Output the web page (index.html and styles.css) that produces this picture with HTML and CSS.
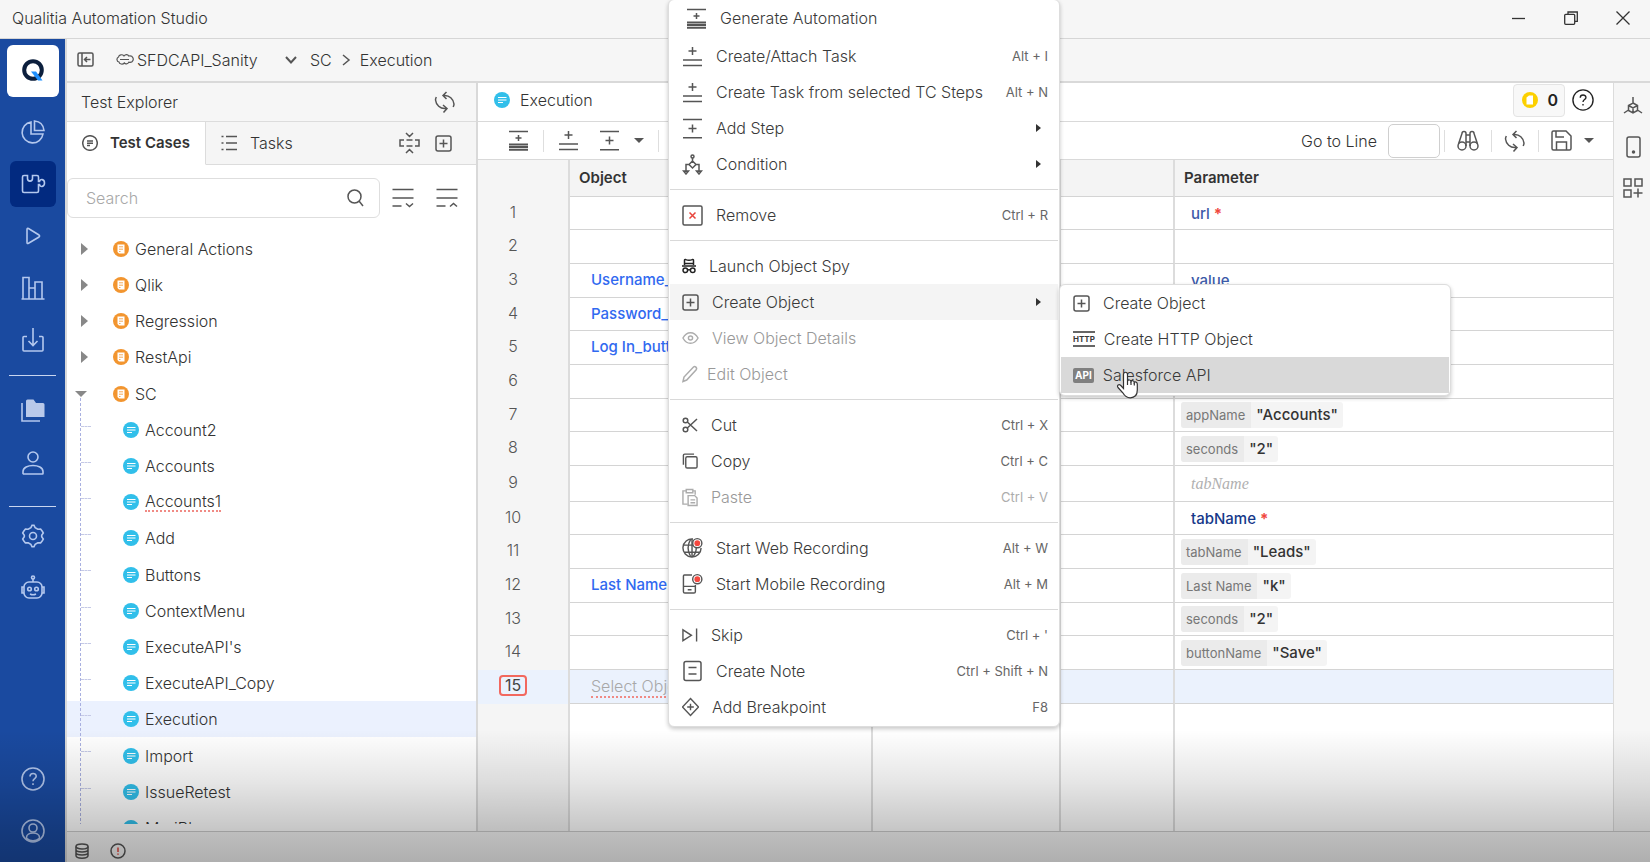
FILE: index.html
```html
<!DOCTYPE html>
<html lang="en">
<head>
<meta charset="utf-8">
<title>Qualitia Automation Studio</title>
<link rel="stylesheet" href="styles.css">
</head>
<body>
<svg class="sprite" aria-hidden="true">
  <symbol id="generate" viewBox="0 0 21 21"><path d="M1 1.5h19M10.500 5v6M7.500 8h6"/><path d="M1 14.500h19M1 17h19M1 19.800h19" stroke-width="1.900"/></symbol>
  <symbol id="task" viewBox="0 0 21 21"><path d="M10.500 1v8M6.500 5h8M1 14h19M1 19.500h19"/></symbol>
  <symbol id="step" viewBox="0 0 21 21"><path d="M1 1.500h19M10.500 6.500v8M6.500 10.500h8M1 19.800h19"/></symbol>
  <symbol id="condition" viewBox="0 0 21 21"><circle cx="10.500" cy="2.500" r="1.500"/><path d="M10.500 4v3M10.500 7l3.500 3.500-3.500 3.500L7 10.500zM7 10.500H4V18M14 10.500h3V18M1.500 17h5L4 20zM14.500 17h5L17 20z"/></symbol>
  <symbol id="remove" viewBox="0 0 21 21"><rect x="1" y="1" width="19" height="19" rx="1.500"/><path class="red" d="M7.500 7.500l6 6M13.500 7.500l-6 6"/></symbol>
  <symbol id="spy" viewBox="0 0 14 16"><path d="M2.500 7V2.500Q2.500 1.300 3.700 1.600q3.300 1.200 6.600 0Q11.500 1.300 11.500 2.500V7M0 8h14M3 5.500h8"/><circle cx="3.300" cy="12.300" r="2.300"/><circle cx="10.700" cy="12.300" r="2.300"/><path d="M5.600 11.800h2.800"/></symbol>
  <symbol id="plusbox" viewBox="0 0 17 17"><rect x="1" y="1" width="15" height="15" rx="2"/><path d="M8.500 4.500v8M4.500 8.500h8"/></symbol>
  <symbol id="eye" viewBox="0 0 18 16"><path d="M1 8c4-7.500 12-7.500 16 0-4 7.500-12 7.500-16 0z"/><circle cx="9" cy="8" r="2.200"/></symbol>
  <symbol id="pencil" viewBox="0 0 16 18"><path d="M1 16.500l1-4.500L11.500 2c1.500-1.300 4 .8 2.700 2.700L4.700 15z"/></symbol>
  <symbol id="cut" viewBox="0 0 16 16"><circle cx="3.500" cy="3.500" r="2.300"/><circle cx="3.500" cy="12.500" r="2.300"/><path d="M5.300 5L15 14M5.300 11L15 2"/></symbol>
  <symbol id="copy" viewBox="0 0 17 17"><rect x="4" y="4" width="12" height="12" rx="1.500"/><path d="M1.500 12.500V2.500q0-1.300 1.300-1.300h10"/></symbol>
  <symbol id="paste" viewBox="0 0 17 19"><path d="M6 16.500H1V2.500h3M11.500 2.500h2.500v4M4.500 1h7v3.500h-7z"/><path d="M6.500 7.500h7l2.500 2.500v8H6.500zM9 12h5M9 15h5"/></symbol>
  <symbol id="web" viewBox="0 0 22 22"><path d="M11.500 1.500A9.500 9.500 0 1 0 20 11M2 8h10M2.500 15.500h16.500M9 2c-3.500 6-3.500 12 0 18M11 20.500c3-3 4-6 4-10M10.500 2v18.500"/><circle class="halo" cx="16" cy="6" r="4.800"/><circle class="rec" cx="16" cy="6" r="3"/></symbol>
  <symbol id="mobilerec" viewBox="0 0 22 22"><path d="M10.500 1.500H2.500Q1.500 1.500 1.500 2.500v16.500q0 1.500 1.500 1.500h9.500q1.500 0 1.500-1.500V12M1.500 13.500h12.500M6 17h4"/><circle class="halo" cx="16" cy="6" r="4.800"/><circle class="rec" cx="16" cy="6" r="3"/></symbol>
  <symbol id="skip" viewBox="0 0 17 16"><path d="M1 2.500v11.500l9-5.700zM15.500 1v14"/></symbol>
  <symbol id="note" viewBox="0 0 21 22"><rect x="2" y="1.500" width="17" height="19" rx="2"/><path d="M6.500 7.500h8M6.500 14h8"/></symbol>
  <symbol id="break" viewBox="0 0 18 20"><path d="M9 1l8.500 9L9 19 .5 10zM9 6.500v7M5.500 10h7"/></symbol>
  <symbol id="refresh" viewBox="0 0 22 22"><path d="M9.500 4.500c6-.8 10 4 10.500 8.500 0 1-.3 2-.8 3M12.500 1L9 4.500l3.500 3.500M12 17.500c-6 .8-10-4-10.500-8.500 0-1 .3-2 .8-3M9 14l4 3.500-3.500 4"/></symbol>
  <symbol id="tc" viewBox="0 0 16 16"><circle cx="8" cy="8" r="8" fill="#31bfea" stroke="none"/><path d="M4 5.500h8.500M4 8h8.500M4 10.500h5" stroke="#fff" stroke-width="1.200"/></symbol>
  <symbol id="folder" viewBox="0 0 16 16"><circle cx="8" cy="8" r="8" fill="#f2952f" stroke="none"/><path d="M4.500 3.500h7v9h-5.500l-1.500-1.500z" fill="#fff" stroke="none"/><path d="M6 5.800h4M6 8.200h4M6 10.500h1.500" stroke="#f2952f" stroke-width=".8"/></symbol>
  <symbol id="help" viewBox="0 0 24 24"><circle cx="12" cy="12" r="11"/><path d="M9 9.500c0-4 6.200-3.800 6.200-.3 0 2.400-3.200 2.300-3.200 5M12 16.300v1.700"/></symbol>
</svg>

<header class="titlebar">
  <h1>Qualitia Automation Studio</h1>
  <div class="window-controls">
    <button aria-label="Minimize"><svg width="14" height="14"><path d="M0 7.500h13"/></svg></button>
    <button aria-label="Restore"><svg width="14" height="14"><rect x=".7" y="3.300" width="10" height="10" rx="1"/><path d="M4 3V1h9.300v9.300H11"/></svg></button>
    <button aria-label="Close"><svg width="14" height="14"><path d="M.5.500l13 13M13.500.500l-13 13"/></svg></button>
  </div>
</header>

<div class="shell">
  <nav class="rail" aria-label="Main">
    <button class="logo" aria-label="Qualitia"><svg width="24" height="26" viewBox="0 0 24 26"><circle cx="12" cy="12" r="8.800" stroke="#0c1f3d" stroke-width="4"/><path d="M10 13.500h5l6.500 9h-4.500z" fill="#1e90ff" stroke="none"/></svg></button>
    <button aria-label="Dashboard"><svg width="24" height="24"><path d="M10 2A10.500 10.500 0 1 0 22 14H10zM13.500 1v9.500H23C22.500 5 19 1.500 13.500 1z"/></svg></button>
    <button class="active" aria-label="Test design"><svg width="26" height="24"><path d="M4 3.500h3.500v3c0 3.500 5 3.500 5 0v-3H17q1.500 0 1.500 1.500v4.500h1c.5-3 5-2.500 5 1.500s-4.500 4.500-5 1.500h-1V19q0 1.500-1.500 1.500H4Q2.500 20.500 2.500 19V5Q2.500 3.500 4 3.500z"/></svg></button>
    <button aria-label="Run"><svg width="24" height="24"><path d="M6 5.500v13q0 1.500 1.500.8L18 13q1.200-1 0-2L7.500 4.500Q6 4 6 5.500z"/></svg></button>
    <button aria-label="Reports"><svg width="24" height="24"><path d="M.5 23h23M2 23V1.500h6V23M8 12h6v11M14 23V6h7v17"/></svg></button>
    <button aria-label="Import"><svg width="24" height="26"><path d="M6 9.500H3q-1 0-1 1V23q0 1 1 1h18q1 0 1-1V10.500q0-1-1-1h-3M12 1v17M7.500 14l4.500 4.500 4.500-4.500"/></svg></button>
    <hr>
    <button aria-label="Projects"><svg width="24" height="24"><path class="solid" d="M5 2q0-1.500 1.500-1.500h6L15 4h7q1.500 0 1.500 1.500V18H5z"/><path d="M1 4v18h18"/></svg></button>
    <button aria-label="Users"><svg width="24" height="24"><circle cx="12" cy="6" r="5"/><path d="M2 22.500v-2c0-8 20-8 20 0v2q0 .5-.5.500h-19z"/></svg></button>
    <hr class="low">
    <button aria-label="Settings"><svg width="24" height="24"><path d="M9.800 3.800L11 1.300h2l1.200 2.500 2.600 1.500 2.800-.2 1.700 2.200 1 1.700-1.600 2.300v1.400l1.600 2.300-1 1.700-1.700 2.200-2.800-.2-2.600 1.500L13 22.700h-2l-1.200-2.500-2.600-1.500-2.800.2-1.700-2.200-1-1.700 1.600-2.300v-1.400L1.700 9l1-1.700 1.700-2.200 2.800.2z"/><circle cx="12" cy="12" r="3.500"/></svg></button>
    <button aria-label="Assistant"><svg width="24" height="26"><rect x="3" y="7" width="18" height="16" rx="5"/><circle cx="8.500" cy="14" r="1.800"/><circle cx="15.500" cy="14" r="1.800"/><circle cx="12" cy="2.500" r="1.500"/><path d="M12 4v3M9 19c2 1 4 1 6 0M3 12H1v6h2M21 12h2v6h-2"/></svg></button>
    <span class="grow"></span>
    <button aria-label="Help"><svg width="24" height="24"><use href="#help"/></svg></button>
    <button aria-label="Account"><svg width="24" height="24"><circle cx="12" cy="12" r="11"/><circle cx="12" cy="9" r="4"/><path d="M5.500 19.500v-1c0-6 13-6 13 0v1c-4 3-9 3-13 0z"/></svg></button>
  </nav>

  <div class="work">
    <div class="crumbs">
      <button aria-label="Collapse panel"><svg width="17" height="15"><rect x="1" y="1" width="15" height="13" rx="1.500"/><path d="M5 1v13M13.500 7.500H7.500M10 5L7.500 7.500 10 10"/></svg></button>
      <svg class="cloud" width="18" height="14"><path d="M2.500 4C3 1.500 6.500 1 8 3c1.500-2 4-1.500 4.700 0C17 2 18.500 6.500 16 8.800c-1 .8-2.500.6-3.200.4-1 2-3.500 2-4.500.8-1.500 1.800-5 1.200-5.300-1C.5 8.500.3 5 2.500 4z"/><path d="M4 6.500h9" stroke-width="1"/></svg>
      <label class="project"><select aria-label="Project"><option>SFDCAPI_Sanity</option></select><svg width="12" height="8"><path d="M1 1l5 5.500L11 1" stroke-width="2"/></svg></label>
      <a href="#sc">SC</a>
      <svg width="10" height="12"><path d="M2 1l6 5-6 5"/></svg>
      <a href="#execution">Execution</a>
    </div>

    <div class="panes">
      <section class="explorer">
        <div class="explorer-head"><h2>Test Explorer</h2><button aria-label="Refresh"><svg width="22" height="22"><use href="#refresh"/></svg></button></div>
        <div class="tabs">
          <button class="tab on"><svg width="16" height="16"><circle cx="8" cy="8" r="7.300"/><path d="M5 6h6M5 8.300h6M5 10.500h3"/></svg>Test Cases</button>
          <button class="tab"><svg width="17" height="18"><path d="M5 2.500h11M5 9h11M5 15.500h11M.5 2.500h2M.5 9h2M.5 15.500h2"/></svg>Tasks</button>
          <div class="tab-tools">
            <button aria-label="Collapse"><svg width="21" height="22"><path d="M7 1l3.500 3.500L14 1M7 21l3.500-3.500L14 21M5 8H1v6h4M16 8h4v6h-4M7.500 8h6M7.500 14h6" /></svg></button>
            <button aria-label="Add"><svg width="17" height="17"><use href="#plusbox"/></svg></button>
          </div>
        </div>
        <div class="find">
          <label class="search"><input type="search" placeholder="Search" aria-label="Search"><svg width="17" height="18"><circle cx="7.500" cy="7.500" r="6.500"/><path d="M12 12l4 5"/></svg></label>
          <button aria-label="Expand all"><svg width="22" height="20"><path d="M.5 1.500h21M.5 10h21M.5 18h9M14 15.500l3.500 3 3.500-3"/></svg></button>
          <button aria-label="Collapse all"><svg width="22" height="20"><path d="M.5 1.500h21M.5 10h21M.5 18h9M14 18.500l3.500-3 3.500 3"/></svg></button>
        </div>
        <div class="tree">
          <ul>
            <li><i class="arrow"></i><svg><use href="#folder"/></svg>General Actions</li>
            <li><i class="arrow"></i><svg><use href="#folder"/></svg>Qlik</li>
            <li><i class="arrow"></i><svg><use href="#folder"/></svg>Regression</li>
            <li><i class="arrow"></i><svg><use href="#folder"/></svg>RestApi</li>
            <li><i class="arrow open"></i><svg><use href="#folder"/></svg>SC</li>
          </ul>
          <ul class="kids">
            <li><svg><use href="#tc"/></svg>Account2</li>
            <li><svg><use href="#tc"/></svg>Accounts</li>
            <li><svg><use href="#tc"/></svg><span class="wavy">Accounts1</span></li>
            <li><svg><use href="#tc"/></svg>Add</li>
            <li><svg><use href="#tc"/></svg>Buttons</li>
            <li><svg><use href="#tc"/></svg>ContextMenu</li>
            <li><svg><use href="#tc"/></svg>ExecuteAPI's</li>
            <li><svg><use href="#tc"/></svg>ExecuteAPI_Copy</li>
            <li class="selected"><svg><use href="#tc"/></svg>Execution</li>
            <li><svg><use href="#tc"/></svg>Import</li>
            <li><svg><use href="#tc"/></svg>IssueRetest</li>
            <li><svg><use href="#tc"/></svg>MariBl</li>
          </ul>
        </div>
      </section>

      <main class="editor">
        <div class="editor-tabs">
          <svg width="16" height="16"><use href="#tc"/></svg><span>Execution</span>
          <button class="counter"><svg width="16" height="16"><circle cx="8" cy="8" r="8" fill="#fcd000" stroke="none"/><path d="M4.500 5.500L7 3.500h4v9H4.500z" fill="#fff" stroke="none"/></svg>0</button>
          <button class="dark" aria-label="Help"><svg width="22" height="22"><use href="#help"/></svg></button>
        </div>
        <div class="toolbar">
          <button aria-label="Generate automation"><svg width="21" height="21"><use href="#generate"/></svg></button><i class="sep"></i>
          <button aria-label="Create task"><svg width="21" height="21"><use href="#task"/></svg></button>
          <button class="more" aria-label="Add step"><svg width="21" height="21"><use href="#step"/></svg><i class="caret"></i></button><i class="sep"></i>
          <label class="goto">Go to Line <input type="text"></label><i class="sep"></i>
          <button aria-label="Find"><svg width="22" height="22"><circle cx="5" cy="16" r="4"/><circle cx="17" cy="16" r="4"/><path d="M1.500 14L5 3.500Q5 1.500 7 1.500t2 2V16M20.500 14L17 3.500q0-2-2-2t-2 2V16M9 5h4M9 12h4"/></svg></button><i class="sep"></i>
          <button aria-label="Refresh"><svg width="22" height="22"><use href="#refresh"/></svg></button><i class="sep"></i>
          <button class="more" aria-label="Save"><svg width="21" height="21"><path d="M1 2.500Q1 1 2.500 1H15l5 5v12.500q0 1.500-1.500 1.500h-16Q1 20 1 18.500zM5 1v6h8M5.500 20v-8h10v8"/></svg><i class="caret"></i></button>
        </div>
        <div class="grid">
          <table>
            <colgroup><col class="c-num"><col class="c-obj"><col class="c-act"><col class="c-val"><col></colgroup>
            <thead><tr><td></td><th>Object</th><th></th><th></th><th>Parameter</th></tr></thead>
            <tbody>
              <tr><td>1</td><td></td><td></td><td></td><td><span class="need">url <b>*</b></span></td></tr>
              <tr><td>2</td><td></td><td></td><td></td><td></td></tr>
              <tr><td>3</td><td><a href="#u">Username_input</a></td><td></td><td></td><td><span class="need">value</span></td></tr>
              <tr><td>4</td><td><a href="#p">Password_input</a></td><td></td><td></td><td></td></tr>
              <tr><td>5</td><td><a href="#l">Log In_button</a></td><td></td><td></td><td></td></tr>
              <tr><td>6</td><td></td><td></td><td></td><td></td></tr>
              <tr><td>7</td><td></td><td></td><td></td><td><span class="chip"><span>appName</span><b>"Accounts"</b></span></td></tr>
              <tr><td>8</td><td></td><td></td><td></td><td><span class="chip"><span>seconds</span><b>"2"</b></span></td></tr>
              <tr class="tall"><td>9</td><td></td><td></td><td></td><td><em>tabName</em></td></tr>
              <tr><td>10</td><td></td><td></td><td></td><td><span class="need strong">tabName <b>*</b></span></td></tr>
              <tr><td>11</td><td></td><td></td><td></td><td><span class="chip"><span>tabName</span><b>"Leads"</b></span></td></tr>
              <tr><td>12</td><td><a href="#n">Last Name</a></td><td></td><td></td><td><span class="chip"><span>Last Name</span><b>"k"</b></span></td></tr>
              <tr><td>13</td><td></td><td></td><td></td><td><span class="chip"><span>seconds</span><b>"2"</b></span></td></tr>
              <tr><td>14</td><td></td><td></td><td></td><td><span class="chip"><span>buttonName</span><b>"Save"</b></span></td></tr>
              <tr class="current"><td><span class="mark">15</span></td><td><span class="hint">Select Object</span></td><td></td><td></td><td></td></tr>
              <tr class="rest"><td></td><td></td><td></td><td></td><td></td></tr>
            </tbody>
          </table>
        </div>
      </main>

      <aside class="side">
        <button aria-label="Objects"><svg width="20" height="20"><path d="M10 1v6M10 7l4.500 2.500v5L10 17l-4.500-2.500v-5zM5.500 9.500L10 12l4.500-2.500M10 12v5M5.500 14L1 17M14.500 14l4.500 3"/></svg></button>
        <button aria-label="Devices"><svg width="15" height="22"><rect x="1" y="1" width="13" height="20" rx="2"/><circle cx="7.500" cy="16" r="1" fill="currentColor"/></svg></button>
        <button aria-label="Plugins"><svg width="20" height="20"><path d="M1 1h7v7H1zM12 1h7v7h-7zM1 12h7v7H1zM15 10.500v9M10.500 15h9"/></svg></button>
      </aside>
    </div>

    <footer class="status">
      <button aria-label="Database"><svg width="14" height="16"><ellipse cx="7" cy="3.500" rx="6" ry="2.500"/><path d="M1 3.500v9c0 3.500 12 3.500 12 0v-9M1 6.500c0 3.300 12 3.300 12 0M1 9.500c0 3.300 12 3.300 12 0"/></svg></button>
      <button aria-label="Errors"><svg width="16" height="16"><circle cx="8" cy="8" r="7"/><path class="red" d="M8 4.500v4.500M8 10.500v1.200"/></svg></button>
    </footer>
  </div>
</div>

<menu class="menu context">
  <li class="first"><button><svg width="21" height="21"><use href="#generate"/></svg>Generate Automation</button></li>
  <li><button><svg width="21" height="21"><use href="#task"/></svg>Create/Attach Task<kbd>Alt + I</kbd></button></li>
  <li><button><svg width="21" height="21"><use href="#task"/></svg>Create Task from selected TC Steps<kbd>Alt + N</kbd></button></li>
  <li><button><svg width="21" height="21"><use href="#step"/></svg>Add Step<i class="next"></i></button></li>
  <li><button><svg width="21" height="21"><use href="#condition"/></svg>Condition<i class="next"></i></button></li>
  <li class="line"></li>
  <li><button><svg width="21" height="21"><use href="#remove"/></svg>Remove<kbd>Ctrl + R</kbd></button></li>
  <li class="line"></li>
  <li><button><svg class="ink" width="14" height="16"><use href="#spy"/></svg>Launch Object Spy</button></li>
  <li class="hover"><button><svg width="17" height="17"><use href="#plusbox"/></svg>Create Object<i class="next"></i></button></li>
  <li><button disabled><svg width="17" height="16"><use href="#eye"/></svg>View Object Details</button></li>
  <li><button class="tight" disabled><svg width="16" height="18"><use href="#pencil"/></svg>Edit Object</button></li>
  <li class="line"></li>
  <li><button><svg width="16" height="16"><use href="#cut"/></svg>Cut<kbd>Ctrl + X</kbd></button></li>
  <li><button><svg width="16" height="16"><use href="#copy"/></svg>Copy<kbd>Ctrl + C</kbd></button></li>
  <li><button disabled><svg width="16" height="19"><use href="#paste"/></svg>Paste<kbd>Ctrl + V</kbd></button></li>
  <li class="line"></li>
  <li><button><svg width="21" height="22"><use href="#web"/></svg>Start Web Recording<kbd>Alt + W</kbd></button></li>
  <li><button><svg width="21" height="22"><use href="#mobilerec"/></svg>Start Mobile Recording<kbd>Alt + M</kbd></button></li>
  <li class="line"></li>
  <li><button><svg width="16" height="16"><use href="#skip"/></svg>Skip<kbd>Ctrl + '</kbd></button></li>
  <li><button><svg width="21" height="22"><use href="#note"/></svg>Create Note<kbd>Ctrl + Shift + N</kbd></button></li>
  <li><button><svg width="17" height="20"><use href="#break"/></svg>Add Breakpoint<kbd>F8</kbd></button></li>
</menu>

<menu class="menu sub">
  <li><button><svg width="17" height="17"><use href="#plusbox"/></svg>Create Object</button></li>
  <li><button class="tight"><span class="http">HTTP</span>Create HTTP Object</button></li>
  <li class="pressed"><button class="tight"><span class="api">API</span>Salesforce API</button></li>
</menu>

<svg class="pointer" width="24" height="28" viewBox="0 0 24 28" aria-hidden="true"><path d="M7.500 17.500V3.500c0-3 4-3 4 0V10c.5-1.500 3.300-1.300 3.500.5.700-1.300 3.300-1 3.300 1 .8-1 3-.6 3 1.500v6c0 5-2.500 7.800-7 7.800-4 0-5.800-2-7.500-5L2 16.500c-1.500-2 .8-3.800 2.800-2z"/><path d="M11.500 10v4M15 10.500v3.500M18.300 11.500v3"/></svg>
<div class="shade"></div>
</body>
</html>
```
FILE: styles.css
```css
* { box-sizing: border-box; }
body {
  margin: 0;
  height: 100vh;
  display: flex;
  flex-direction: column;
  overflow: hidden;
  position: relative;
  background: #f6f6f6;
  color: #333;
  font: 300 16px/20px Inter, "Liberation Sans", sans-serif;
}
button, input, select { font: inherit; color: inherit; }
button {
  display: flex;
  align-items: center;
  justify-content: center;
  border: 0;
  padding: 0;
  background: none;
  white-space: nowrap;
}
h1, h2 { margin: 0; font-size: 16px; font-weight: 300; }
a { color: inherit; text-decoration: none; }
ul, menu { margin: 0; padding: 0; list-style: none; }
svg { flex: none; fill: none; stroke: #555; stroke-width: 1.5; }
.sprite { display: none; }
.red { stroke: #e8453c; }
.rec { fill: #f5483f; stroke: none; }
.halo { fill: #fff; }

.titlebar {
  flex: none;
  height: 39px;
  display: flex;
  align-items: center;
  justify-content: space-between;
  padding: 0 20px 2px 12px;
  border-bottom: 1px solid #d6d6d6;
}
.window-controls { display: flex; gap: 38px; }
.window-controls svg { stroke: #333; stroke-width: 1.3; }

.shell { flex: 1; display: flex; min-height: 0; }
.rail {
  width: 65px;
  flex: none;
  display: flex;
  flex-direction: column;
  align-items: center;
  padding: 6px 0 2px;
  background: #1a4aa0;
}
.rail button { width: 46px; height: 46px; margin-bottom: 6px; border-radius: 6px; flex: none; }
.rail svg { stroke: #b4c8ee; stroke-width: 1.6; }
.rail .solid { fill: #b9c9ea; stroke: none; }
.rail .logo { width: 52px; height: 52px; margin-bottom: 12px; background: #fff; }
.rail .active { background: #022a80; }
.rail hr { width: 47px; height: 1px; margin: 6px 0 12px; border: 0; background: #c9d6f0; flex: none; }
.rail .low { margin: 14px 0 6px; }
.grow { flex: 1; }

.work { flex: 1; min-width: 0; display: flex; flex-direction: column; border-left: 2px solid #d9d9d9; }
.crumbs {
  height: 44px;
  flex: none;
  display: flex;
  align-items: center;
  padding: 0 10px 1px;
  border-bottom: 2px solid #d9d9d9;
}
.crumbs > button { margin-right: 22px; }
.cloud { margin-right: 3px; stroke-width: 1.2; }
.project { display: flex; align-items: center; width: 160px; margin-right: 13px; }
.project select { flex: 1; min-width: 0; appearance: none; border: 0; padding: 0; background: none; }
.crumbs > a + svg { margin: 0 9px; }

.panes { flex: 1; display: flex; min-height: 0; }
.explorer { width: 411px; flex: none; display: flex; flex-direction: column; background: #fff; border-right: 2px solid #d9d9d9; }
.explorer-head { height: 39px; flex: none; display: flex; align-items: center; justify-content: space-between; padding: 0 20px 0 14px; background: #f6f6f6; border-bottom: 1px solid #dcdcdc; }
.tabs { height: 43px; flex: none; display: flex; background: #f5f5f5; }
.tab { gap: 12px; padding: 0 15px; border-bottom: 1px solid #dcdcdc; }
.tab.on { background: #fff; border-bottom-color: #fff; border-right: 1px solid #dcdcdc; font-size: 15px; font-weight: 600; color: #333; }
.tab-tools { flex: 1; display: flex; justify-content: flex-end; gap: 15px; padding-right: 24px; border-bottom: 1px solid #dcdcdc; }
.find { flex: none; display: flex; align-items: center; padding: 13px 18px 13px 0; gap: 22px; }
.search { flex: 1; height: 40px; display: flex; align-items: center; padding: 0 15px 0 18px; margin-right: -10px; border: 1px solid #dedede; border-radius: 6px; }
.search input { flex: 1; min-width: 0; border: 0; padding: 0; outline: 0; background: none; }
.search input::placeholder { color: #a8a8a8; }
.tree { flex: 1; overflow: hidden; margin-bottom: 7px; }
.tree li { position: relative; height: 36px; display: flex; align-items: center; padding-left: 46px; gap: 6px; }
.tree li:nth-child(5n) { height: 37px; }
.tree svg { width: 16px; height: 16px; }
.arrow { position: absolute; left: 14px; border: 6px solid transparent; border-width: 6px 0 6px 7px; border-left-color: #888; }
.arrow.open { left: 8px; border-width: 6px 6px 0; border-color: #888 transparent; }
.kids { position: relative; }
.kids::before { content: ""; position: absolute; z-index: 1; left: 13px; top: -14px; bottom: 0; border-left: 1px dashed #a9b0e0; }
.kids li { padding-left: 56px; }
.kids li::before { content: ""; position: absolute; left: 14px; top: 14px; width: 10px; border-top: 1px dashed #c5c9e6; }
.selected { background: #ebf1fe; }
.wavy, .hint { border-bottom: 2px dotted #f08a84; line-height: 18px; }

.editor { flex: 1; min-width: 0; display: flex; flex-direction: column; background: #fff; border-right: 1px solid #dcdcdc; }
.editor-tabs { height: 39px; flex: none; display: flex; align-items: center; padding: 0 19px 4px 16px; border-bottom: 1px solid #d9d9d9; }
.editor-tabs > span { margin: 0 auto 0 10px; }
.counter { gap: 9px; height: 33px; padding: 0 6px 0 8px; margin-right: 7px; border: 1px solid #e4e4e4; border-radius: 4px; background: #f8f8f8; font-weight: 600; color: #222; }
.dark svg { stroke: #222; }
.toolbar { height: 38px; flex: none; display: flex; align-items: center; padding: 0 9px 0 20px; border-bottom: 1px solid #d9d9d9; }
.toolbar button { margin: 0 10px; }
.sep { width: 1px; height: 22px; margin: 0 4px; background: #dedede; }
.goto ~ .sep { margin: 0 2px; }
.toolbar .more { gap: 14px; }
.toolbar .more:last-child { gap: 12px; }
.caret { border: 5px solid transparent; border-top-color: #555; border-bottom: 0; }
.goto { margin: 0 2px 0 auto; display: flex; align-items: center; gap: 11px; }
.goto input { width: 52px; height: 34px; border: 1px solid #cfcfcf; border-radius: 5px; background: #fff; }

.grid { flex: 1; min-height: 0; }
table { width: 100%; height: 100%; table-layout: fixed; border-collapse: separate; border-spacing: 0; }
.c-num { width: 92px; }
.c-obj { width: 303px; }
.c-act { width: 188px; }
.c-val { width: 114px; }
th, td { padding: 0; border-right: 2px solid #dcdcdc; border-bottom: 1px solid #d4d4d4; text-align: left; white-space: nowrap; overflow: hidden; }
th:last-child, td:last-child { border-right: 0; }
thead { background: #f4f4f4; }
thead tr { height: 37px; }
th { padding-left: 9px; font-size: 15px; font-weight: 600; color: #333; }
tbody tr { height: 34px; }
tbody tr:nth-child(3n+1) { height: 33px; }
tbody .tall { height: 36px; }
tbody .rest:last-child { height: 100%; }
.rest td { border-bottom: 0; }
tr td:first-child { padding: 0 20px 4px 0; border-bottom: 0; background: #f5f5f5; text-align: center; color: #555; }
tbody td:nth-child(2) { padding: 0 0 2px 21px; }
td a { color: #3069f0; font-size: 15px; font-weight: 500; }
td:last-child { padding-left: 6px; }
.need { padding-left: 10px; color: #3c5aa8; font-size: 15px; font-weight: 500; }
.need b { color: #f0473d; }
.strong { color: #16398a; }
em { padding-left: 10px; font-family: "Liberation Serif", serif; color: #b0b0b0; }
.chip { display: inline-flex; height: 26px; line-height: 26px; border-radius: 3px; overflow: hidden; background: #f4f4f4; vertical-align: middle; }
.chip span { padding: 0 6px 0 5px; background: #ebebeb; font-size: 13px; font-weight: 400; color: #777; }
.chip b { padding: 0 5px; font-size: 15px; font-weight: 500; color: #333; }
.current td, .current td:first-child { background: #ebf2fd; }
.mark { display: inline-block; padding: 0 4px; border: 2px solid #f2685f; border-radius: 4px; line-height: 17px; color: #444; font-weight: 400; }
.hint { color: #a8a8a8; }

.side { width: 36px; flex: none; display: flex; flex-direction: column; align-items: center; gap: 20px; padding: 13px 0 0 2px; }

.status { height: 31px; flex: none; display: flex; align-items: center; gap: 21px; padding: 8px 8px 0; border-top: 1px solid #ccc; }

.menu { position: absolute; z-index: 5; width: 392px; padding: 0 1px 1px; background: #fff; border: 1px solid #ddd; border-radius: 6px; box-shadow: 0 2px 4px rgba(0, 0, 0, .22); color: #3a3a3a; }
.menu button { width: 100%; height: 36px; justify-content: flex-start; gap: 13px; padding: 0 10px 0 12px; }
.menu button:disabled { color: #999; }
.menu button:disabled svg { stroke: #acacac; }
.menu .tight { gap: 9px; }
.menu .first { padding: 0 0 2px 4px; }
.menu .line { height: 1px; margin: 7px 0; background: #d9d9d9; }
.menu .hover { background: #f4f4f4; }
.menu .pressed { background: #d9d9d9; }
.menu .ink { stroke: #222; }
kbd { margin-left: auto; font: 400 13px/20px Inter, "Liberation Sans", sans-serif; color: #666; }
button:disabled kbd { color: #acacac; }
.next { margin: 0 7px 0 auto; border: 4px solid transparent; border-left: 5px solid #333; border-right: 0; }
.context { left: 668px; top: -1px; }
.sub { left: 1059px; top: 284px; padding-bottom: 2px; }
.http, .api { font-size: 8px; line-height: 10px; font-weight: 700; }
.http { padding: 1px 0; border: solid #666; border-width: 2px 0; }
.api { padding: 2px; border-radius: 2px; background: #808080; color: #fff; font-size: 10px; line-height: 11px; }
.pointer { position: absolute; z-index: 6; left: 1116px; top: 371px; fill: #fff; stroke: #333; stroke-width: 1.2; }
.shade { position: absolute; z-index: 7; left: 0; right: 0; bottom: 0; height: 132px; pointer-events: none; background: linear-gradient(rgba(0, 0, 0, 0), rgba(0, 0, 0, .1) 40%, rgba(0, 0, 0, .23) 78%, rgba(0, 0, 0, .29)); }
```
